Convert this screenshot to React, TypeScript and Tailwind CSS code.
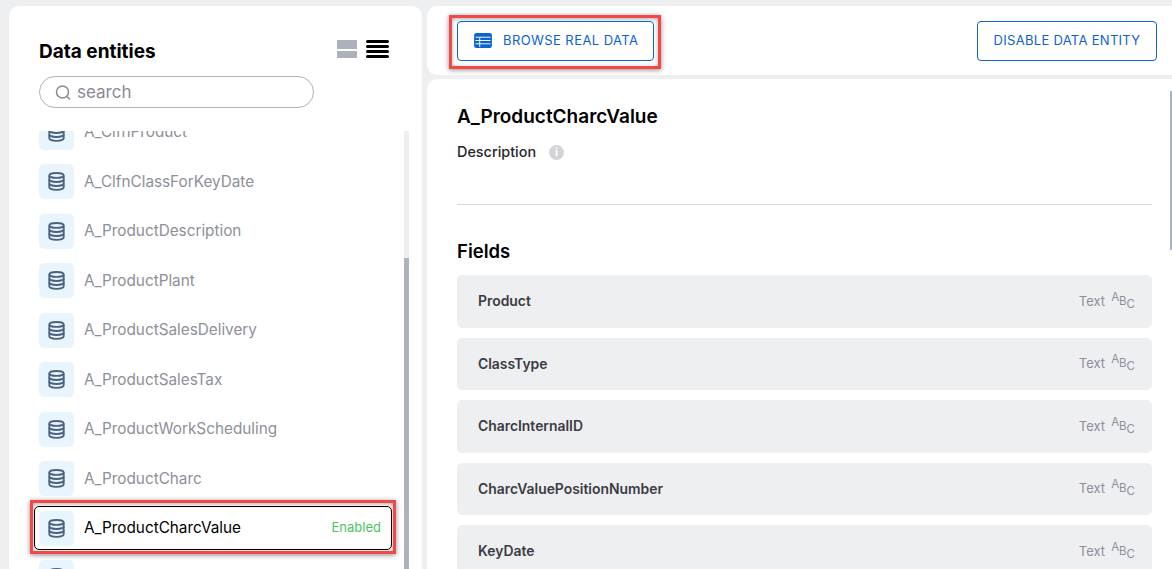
import React from 'react';

const font = { fontFamily: 'Inter, "Liberation Sans", sans-serif' };

const entities = [
  'A_ClfnProduct',
  'A_ClfnClassForKeyDate',
  'A_ProductDescription',
  'A_ProductPlant',
  'A_ProductSalesDelivery',
  'A_ProductSalesTax',
  'A_ProductWorkScheduling',
  'A_ProductCharc',
];

const fields = ['Product', 'ClassType', 'CharcInternalID', 'CharcValuePositionNumber', 'KeyDate'];

function DbIcon(): JSX.Element {
  return (
    <div className="flex h-[35px] w-[35px] shrink-0 items-center justify-center rounded-[5px] bg-[#e9f5fd]">
      <svg width="17" height="19" viewBox="0 0 18 20" fill="none" stroke="#4b6280" strokeWidth="2">
        <ellipse cx="9" cy="3.6" rx="7.6" ry="2.6" />
        <path d="M1.4 3.6v12.6c0 1.5 3.4 2.7 7.6 2.7s7.6-1.2 7.6-2.7V3.6" />
        <path d="M1.4 7.8c0 1.5 3.4 2.7 7.6 2.7s7.6-1.2 7.6-2.7" />
        <path d="M1.4 12c0 1.5 3.4 2.7 7.6 2.7s7.6-1.2 7.6-2.7" />
      </svg>
    </div>
  );
}

function App(): JSX.Element {
  return (
    <div style={font} className="flex h-[569px] w-[1172px] gap-[5px] overflow-hidden bg-[#eeeff1] pl-[9px] pt-[6px]">
      {/* left panel */}
      <div className="flex h-[600px] w-[413px] shrink-0 flex-col rounded-t-[10px] bg-white">
        <div className="flex items-start justify-between pl-[30px] pr-[33px] pt-[33px]">
          <div className="pt-[1px] text-[19px] font-bold leading-[24px] text-black">Data entities</div>
          <div className="flex items-center gap-[9px] pt-[1px]">
            <div className="flex h-[18px] w-[20px] flex-col justify-between">
              <div className="h-[9px] bg-[#adb1bd]" />
              <div className="h-[7px] bg-[#adb1bd]" />
            </div>
            <div className="flex h-[18px] w-[23px] flex-col justify-between">
              <div className="h-[3px] rounded-full bg-black" />
              <div className="h-[3px] rounded-full bg-black" />
              <div className="h-[3px] rounded-full bg-black" />
              <div className="h-[3px] rounded-full bg-black" />
            </div>
          </div>
        </div>
        <div className="ml-[30px] mt-[12px] flex h-[32px] w-[275px] items-center rounded-full border border-[#b0b2bd] pl-[15px]">
          <svg width="17" height="17" viewBox="0 0 17 17" fill="none" stroke="#8a8a94" strokeWidth="1.5">
            <circle cx="7.5" cy="8" r="6" />
            <path d="M12 12.5l3 3" />
          </svg>
          <span className="ml-[5px] text-[17px] leading-none text-[#8a8a94]">search</span>
        </div>
        <div className="mt-[23px] flex h-[438px] overflow-hidden">
          <div className="w-[395px] shrink-0">
            <div className="mt-[-16.5px] flex flex-col gap-[14.5px] pl-[30px]">
              {entities.map((e) => (
                <div key={e} className="flex items-center gap-[10px]">
                  <DbIcon />
                  <span className="pt-[1px] text-[15.3px] text-[#8d8f99]">{e}</span>
                </div>
              ))}
              <div className="relative flex w-[349px] items-center gap-[10px]">
                <div className="absolute -left-[5px] -right-[4px] -top-[5px] -bottom-[4px] rounded-[5px] border border-black bg-white" />
                <div className="absolute -left-[9px] -right-[8px] -top-[11px] -bottom-[8px] border-[3px] border-[#f44848] shadow-[0_1px_5px_rgba(0,0,0,0.45),inset_0_1px_4px_rgba(0,0,0,0.35)]" />
                <div className="relative flex w-full items-center gap-[10px]">
                  <DbIcon />
                  <span className="text-[15.3px] text-black">A_ProductCharcValue</span>
                  <span className="ml-auto pr-[7px] text-[13px] text-[#4cc35a]">Enabled</span>
                </div>
              </div>
              <DbIcon />
            </div>
          </div>
          <div className="flex h-full w-[5px] flex-col bg-[#eeeff1]">
            <div className="mt-[127px] flex-1 bg-[#adb1bd]" />
          </div>
        </div>
      </div>

      {/* right column */}
      <div className="flex min-w-0 flex-1 flex-col gap-[4px]">
        <div className="flex h-[69px] shrink-0 items-center justify-between rounded-l-[10px] bg-white pl-[30px] pr-[15px]">
          <div className="relative">
            <div className="absolute -left-[8px] -right-[7px] -top-[6px] -bottom-[8px] border-[3px] border-[#f44848] shadow-[0_1px_5px_rgba(0,0,0,0.45),inset_0_1px_4px_rgba(0,0,0,0.35)]" />
            <div className="relative flex h-[40px] w-[197px] items-center rounded-[4px] border border-[#0b63ce] bg-white pl-[16px]">
              <svg width="18" height="15" viewBox="0 0 19 16">
                <rect width="19" height="16" rx="2.5" fill="#0b63ce" />
                <path d="M1.5 4.5h16M1.5 8h16M1.5 11.5h16M6 4.5V15" stroke="#fff" strokeWidth="1" fill="none" />
              </svg>
              <span className="ml-[11px] text-[13px] tracking-[0.42px] text-[#0b63ce]">BROWSE REAL DATA</span>
            </div>
          </div>
          <div className="flex h-[40px] w-[180px] items-center justify-center rounded-[4px] border border-[#0b63ce] text-[13px] tracking-[0.3px] text-[#0b63ce]">
            DISABLE DATA ENTITY
          </div>
        </div>

        <div className="flex min-h-0 flex-1">
          <div className="min-w-0 flex-1 rounded-tl-[10px] bg-white pl-[30px] pr-[17px] pt-[26px]">
            <div className="text-[19px] font-semibold leading-[24px] text-black">A_ProductCharcValue</div>
            <div className="mt-[13px] flex items-center gap-[13px]">
              <span className="text-[14.4px] font-medium leading-[20px] text-[#26262c]">Description</span>
              <div className="flex h-[15px] w-[15px] items-center justify-center rounded-full bg-[#d3d4d8] text-[11px] font-bold leading-none text-white">
                i
              </div>
            </div>
            <div className="mt-[42px] h-px bg-[#d6d7db]" />
            <div className="mt-[34px] text-[18.5px] font-semibold leading-[24px] text-black">Fields</div>
            <div className="mt-[12px] flex flex-col gap-[10px]">
              {fields.map((f) => (
                <div key={f} className="flex h-[52.5px] shrink-0 items-center justify-between rounded-[5px] bg-[#eeeff1] pl-[21px] pr-[17px]">
                  <span className="pt-[1px] text-[13.9px] font-semibold text-[#3b3b44]">{f}</span>
                  <span className="flex items-center text-[13px] text-[#8d8f99]">
                    Text
                    <span className="ml-[6px] flex items-center text-[11.5px] leading-none">
                      <span className="-translate-y-[4px]">A</span>
                      <span>B</span>
                      <span className="translate-y-[3px]">C</span>
                    </span>
                  </span>
                </div>
              ))}
            </div>
          </div>
          <div className="w-[3px] shrink-0 bg-white">
            <div className="ml-px mt-[12px] h-[159px] w-[2px] bg-[#adb1bd]" />
          </div>
        </div>
      </div>
    </div>
  );
}

export default App;
